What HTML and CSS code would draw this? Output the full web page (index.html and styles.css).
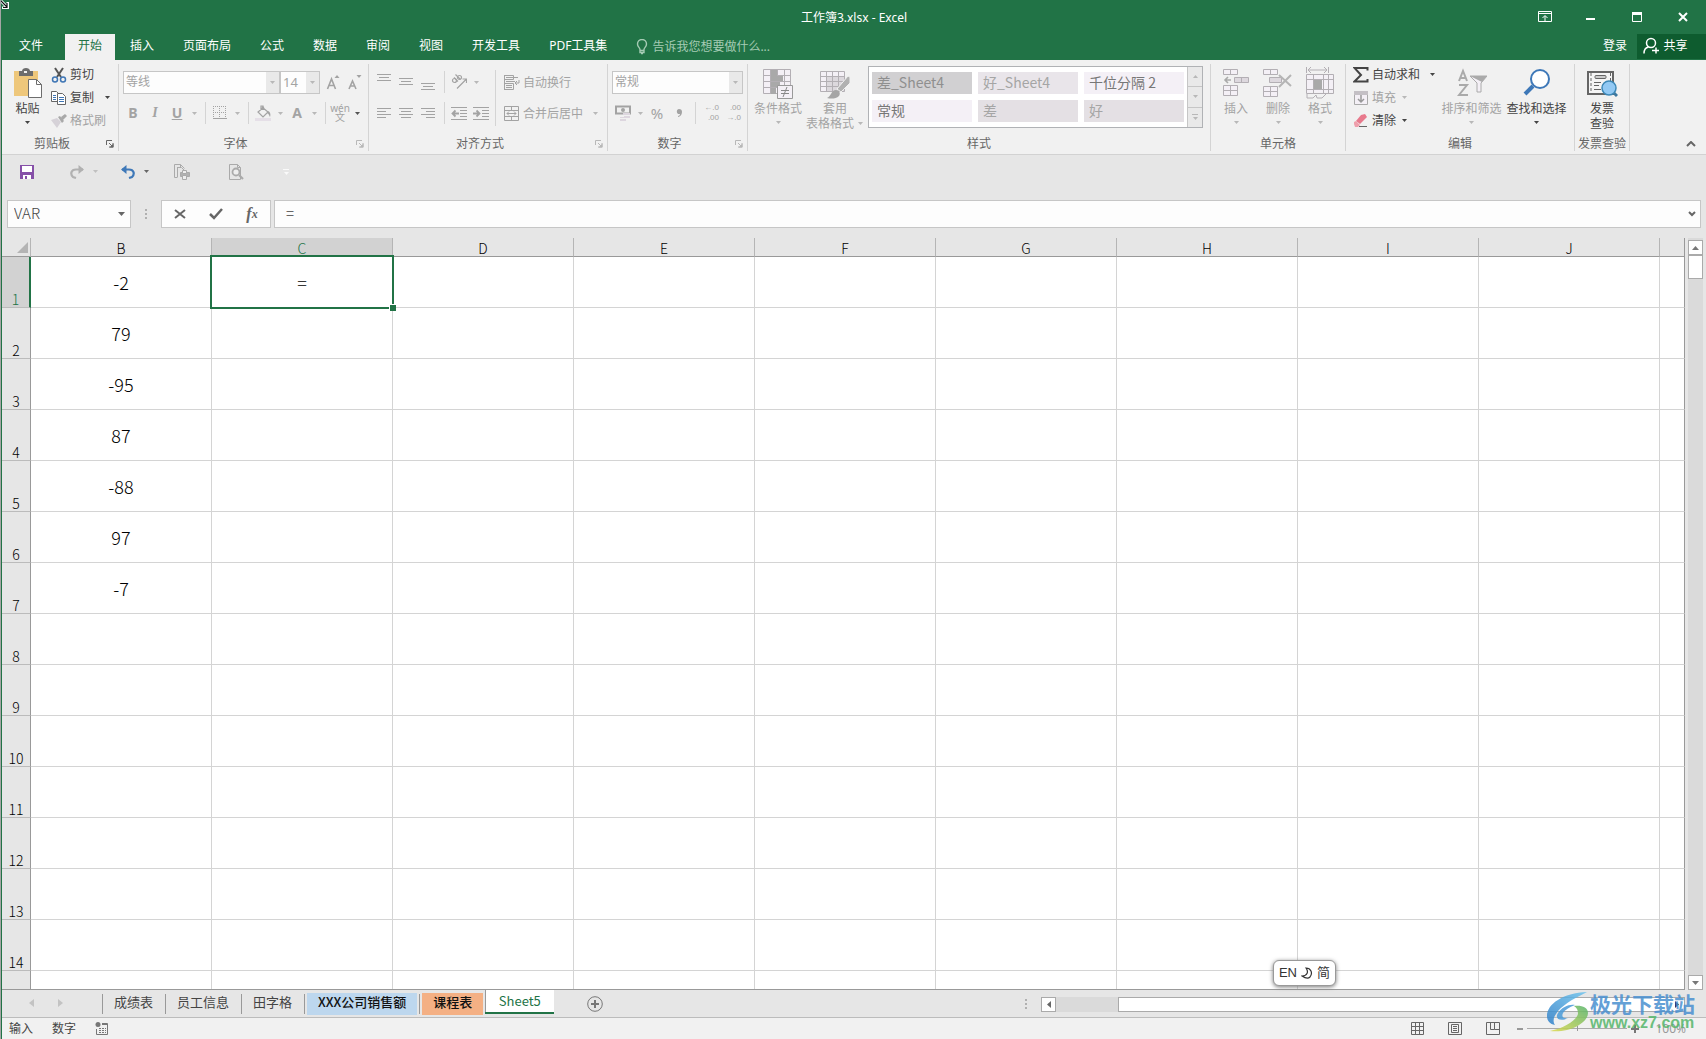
FILE: index.html
```html
<!DOCTYPE html>
<html lang="zh-CN">
<head>
<meta charset="utf-8">
<meta name="viewport" content="width=device-width, initial-scale=1">
<title>工作簿3.xlsx - Excel</title>
<link rel="stylesheet" href="styles.css">
</head>
<body>
<svg class="defs" width="0" height="0" aria-hidden="true">
  <symbol id="launch" viewBox="0 0 8 8"><path d="M.5 5V.5H6M3 3l3 3M7 3v4H3" fill="none" stroke="currentColor"/><path d="M7.500 3.500v4h-4z" fill="currentColor"/></symbol>
  <symbol id="down" viewBox="0 0 5 3"><path d="M0 0h5L2.500 3z" fill="currentColor"/></symbol>
</svg>
<div class="app">
  <header class="titlebar">
    <h1 class="title">工作簿3.xlsx - Excel</h1>
    <div class="window-buttons">
      <button aria-label="功能区显示选项"><svg width="14" height="12" viewBox="0 0 14 12"><path d="M.5.5h13v10H.5zM.5 2.500h13M7 10V5M4.500 7L7 4.500 9.500 7" fill="none" stroke="currentColor"/></svg></button>
      <button aria-label="最小化"><svg width="10" height="10" viewBox="0 0 10 10"><path d="M0 6h9v2H0z" fill="currentColor"/></svg></button>
      <button aria-label="最大化"><svg width="10" height="10" viewBox="0 0 10 10"><path d="M.5.5h9v9h-9z" fill="none" stroke="currentColor"/><path d="M0 0h10v3H0z" fill="currentColor"/></svg></button>
      <button aria-label="关闭"><svg width="10" height="10" viewBox="0 0 10 10"><path d="M1 1l8 8M9 1L1 9" stroke="currentColor" stroke-width="2"/></svg></button>
    </div>
  </header>

  <nav class="tabs" aria-label="功能区选项卡">
    <button class="tab file">文件</button>
    <button class="tab active">开始</button>
    <button class="tab">插入</button>
    <button class="tab">页面布局</button>
    <button class="tab">公式</button>
    <button class="tab">数据</button>
    <button class="tab">审阅</button>
    <button class="tab">视图</button>
    <button class="tab">开发工具</button>
    <button class="tab">PDF工具集</button>
    <button class="tell"><svg width="12" height="16" viewBox="0 0 12 16" fill="none" stroke="currentColor" stroke-width="1.400"><path d="M4 10.500C4 8.500 1.500 8 1.500 5a4.500 4.500 0 0 1 9 0c0 3-2.500 3.500-2.500 5.500v3H4zM4 11.500h4M5 14.500h2"/></svg>告诉我您想要做什么...</button>
    <button class="login">登录</button>
    <button class="share"><svg width="16" height="17" viewBox="0 0 16 17" fill="none" stroke="currentColor" stroke-width="1.500"><circle cx="8" cy="6" r="4.500"/><path d="M1 16.500c0-4 2-6 4.500-6.500M13 10.500v6M9 13.500h7"/></svg>共享</button>
  </nav>

  <div class="ribbon">
    <section class="group g-clip">
      <div class="body">
        <button class="big paste"><svg width="30" height="32" viewBox="0 0 30 32"><path d="M1 4h24v25H1z" fill="#eec77b"/><path d="M6 4h3c0-4 8-4 8 0h3v5H6z" fill="#6d6d6d"/><path d="M11 4h3v2h-3z" fill="#f1f1f1"/><path d="M15.500 12.500h8l5 5v13h-13z" fill="#fff" stroke="#6d6d6d"/><path d="M23.500 12.500v5h5" fill="none" stroke="#6d6d6d"/></svg><span>粘贴</span><svg class="dn"><use href="#down"/></svg></button>
        <div class="stack">
          <button class="line"><svg width="16" height="16" viewBox="0 0 16 16" fill="none"><path d="M4 1l6 9M12 1L6 10" stroke="#555" stroke-width="2"/><circle cx="4" cy="12.500" r="2.500" stroke="#3f76b5" stroke-width="1.500"/><circle cx="12" cy="12.500" r="2.500" stroke="#3f76b5" stroke-width="1.500"/></svg>剪切</button>
          <button class="line copy"><svg width="16" height="16" viewBox="0 0 16 16"><path d="M.5 1.500h5l2 2v8h-7z" fill="#fff" stroke="#666"/><path d="M2 5.500h3M2 7.500h3M2 9.500h3" stroke="#3f76b5"/><path d="M6.500 3.500h5l3 3v8h-8z" fill="#fff" stroke="#666"/><path d="M8 7.500h5M8 9.500h5M8 11.500h5" stroke="#3f76b5"/></svg>复制<svg class="dn"><use href="#down"/></svg></button>
          <button class="line off"><svg width="16" height="16" viewBox="0 0 16 16"><path d="M0 7l6-2 4 4-4 6z" fill="#d6d2d8"/><path d="M7 4l2-1 4 5-2 2zM10 4l4-3 2 2-4 4z" fill="#a9a9a9"/></svg>格式刷</button>
        </div>
      </div>
      <footer><h2>剪贴板</h2><button aria-label="剪贴板设置"><svg width="8" height="8"><use href="#launch"/></svg></button></footer>
    </section>

    <section class="group g-font off">
      <div class="body rows">
        <div class="row">
          <label class="combo wide"><select aria-label="字体"><option>等线</option></select><svg class="dn"><use href="#down"/></svg></label>
          <label class="combo size"><select aria-label="字号"><option>14</option></select><svg class="dn"><use href="#down"/></svg></label>
          <button class="tool" aria-label="增大字号"><svg width="14" height="16" viewBox="0 0 14 16"><path d="M1.500 15L5.500 5l4 10M3 11.500h5" fill="none" stroke="currentColor" stroke-width="1.600"/><path d="M8.500 4L11 1l2.500 3z" fill="currentColor"/></svg></button>
          <button class="tool" aria-label="减小字号"><svg width="14" height="16" viewBox="0 0 14 16"><path d="M1 15l3.500-8L8 15M2.500 12h4" fill="none" stroke="currentColor" stroke-width="1.600"/><path d="M8.500 1L11 4l2.500-3z" fill="currentColor"/></svg></button>
        </div>
        <div class="row">
          <button class="tool glyph bold">B</button><button class="tool glyph italic">I</button><button class="tool glyph under">U</button><button class="drop" aria-label="下划线选项"><svg class="dn"><use href="#down"/></svg></button><i class="sep"></i>
          <button class="tool" aria-label="边框"><svg width="14" height="14" viewBox="0 0 14 14"><path d="M.5 0v13M6.500 0v13M12.500 0v13M0 .5h13M0 6.500h13" stroke="currentColor" stroke-dasharray="1 1"/><path d="M0 12.500h14" stroke="currentColor"/></svg></button><button class="drop" aria-label="边框选项"><svg class="dn"><use href="#down"/></svg></button><i class="sep"></i>
          <button class="tool" aria-label="填充颜色"><svg width="16" height="16" viewBox="0 0 16 16"><path d="M7 2l6 5-5 5-5-5 6-5M6 5V1h2v4" fill="none" stroke="currentColor" stroke-width="1.200"/><path d="M12 6c3 0 4 3 3 6-1-2-1-3-3-4z" fill="currentColor"/><path d="M0 13h16v3H0z" fill="#e5dfe7"/></svg></button><button class="drop" aria-label="填充颜色选项"><svg class="dn"><use href="#down"/></svg></button>
          <button class="tool glyph bold">A</button><button class="drop" aria-label="字体颜色选项"><svg class="dn"><use href="#down"/></svg></button><i class="sep"></i>
          <button class="tool wen"><span>wén</span><span>文</span></button><button class="drop on" aria-label="拼音选项"><svg class="dn"><use href="#down"/></svg></button>
        </div>
      </div>
      <footer><h2>字体</h2><button aria-label="字体设置"><svg width="8" height="8"><use href="#launch"/></svg></button></footer>
    </section>

    <section class="group g-align off">
      <div class="body">
        <div class="rows">
          <div class="row">
            <button class="tool" aria-label="顶端对齐"><svg width="14" height="16" viewBox="0 0 14 16"><path d="M0 .5h14M2 3.500h10M0 6.500h14" stroke="currentColor"/></svg></button>
            <button class="tool" aria-label="垂直居中"><svg width="14" height="16" viewBox="0 0 14 16"><path d="M0 4.500h14M2 7.500h10M0 10.500h14" stroke="currentColor"/></svg></button>
            <button class="tool" aria-label="底端对齐"><svg width="14" height="16" viewBox="0 0 14 16"><path d="M0 9.500h14M2 12.500h10M0 15.500h14" stroke="currentColor"/></svg></button><i class="sep"></i>
            <button class="tool" aria-label="方向"><svg width="16" height="16" viewBox="0 0 16 16" fill="none" stroke="currentColor" stroke-width="1.200"><circle cx="3.500" cy="6.500" r="2"/><path d="M3 3.500l4 4M4.500 .5l5 5"/><circle cx="8.500" cy="3.500" r="2"/><path d="M6 14.500l9-9M11.500 5H15.500v4"/></svg></button><button class="drop" aria-label="方向选项"><svg class="dn"><use href="#down"/></svg></button>
          </div>
          <div class="row">
            <button class="tool" aria-label="左对齐"><svg width="14" height="11" viewBox="0 0 14 11"><path d="M0 .5h14M0 3.500h9M0 6.500h14M0 9.500h9" stroke="currentColor"/></svg></button>
            <button class="tool" aria-label="居中"><svg width="14" height="11" viewBox="0 0 14 11"><path d="M0 .5h14M2 3.500h10M0 6.500h14M2 9.500h10" stroke="currentColor"/></svg></button>
            <button class="tool" aria-label="右对齐"><svg width="14" height="11" viewBox="0 0 14 11"><path d="M0 .5h14M5 3.500h9M0 6.500h14M5 9.500h9" stroke="currentColor"/></svg></button><i class="sep"></i>
            <button class="tool" aria-label="减少缩进"><svg width="16" height="13" viewBox="0 0 16 13"><path d="M0 .5h16M9 3.500h7M9 6.500h7M9 9.500h7M0 12.500h16" stroke="currentColor"/><path d="M8 6.500H2M4.500 3.500l-3 3 3 3" fill="none" stroke="currentColor" stroke-width="1.800"/></svg></button>
            <button class="tool" aria-label="增加缩进"><svg width="16" height="13" viewBox="0 0 16 13"><path d="M0 .5h16M9 3.500h7M9 6.500h7M9 9.500h7M0 12.500h16" stroke="currentColor"/><path d="M0 6.500h6M3.500 3.500l3 3-3 3" fill="none" stroke="currentColor" stroke-width="1.800"/></svg></button>
          </div>
        </div>
        <i class="sep tall"></i>
        <div class="rows">
          <div class="row"><button class="line"><svg width="16" height="16" viewBox="0 0 16 16" fill="none" stroke="currentColor"><path d="M.5.500h9v4h-9zM.5 8.500h9v6h-9zM2 2.500h12M2 6.500h9M2 10.500h6M2 12.500h6M15 5v3h-4M13 6l-2 2 2 2M.5 0v15"/></svg>自动换行</button></div>
          <div class="row"><button class="line"><svg width="16" height="16" viewBox="0 0 16 16" fill="none" stroke="currentColor"><path d="M.5.500h14v14H.5zM.5 4.500h14M.5 10.500h14M7.500 0v4M7.500 11v4M3 7.500h9M5 5.500l-2 2 2 2M10 5.500l2 2-2 2"/></svg>合并后居中</button><button class="drop push" aria-label="合并选项"><svg class="dn"><use href="#down"/></svg></button></div>
        </div>
      </div>
      <footer><h2>对齐方式</h2><button aria-label="对齐设置"><svg width="8" height="8"><use href="#launch"/></svg></button></footer>
    </section>

    <section class="group g-num off">
      <div class="body rows">
        <div class="row"><label class="combo fill"><select aria-label="数字格式"><option>常规</option></select><svg class="dn"><use href="#down"/></svg></label></div>
        <div class="row">
          <button class="tool" aria-label="会计数字格式"><svg width="16" height="16" viewBox="0 0 16 16"><path d="M1 1.500h14v7H1z" fill="none" stroke="currentColor" stroke-width="2"/><circle cx="8" cy="5" r="2" fill="currentColor"/><path d="M8 8h7v2H8zM5 12h6v1H5zM9 11h6v2H9zM5 14h6v2H5z" fill="#ddd6df"/></svg></button><button class="drop" aria-label="货币选项"><svg class="dn"><use href="#down"/></svg></button>
          <button class="tool pct">%</button><button class="tool" aria-label="千位分隔样式"><svg width="6" height="8" viewBox="0 0 6 8"><path d="M3 0c2 0 3 1 3 3 0 3-2 4.500-4 5V7c1 0 2-1 2-2-4 1-4-5-1-5z" fill="currentColor"/></svg></button><i class="sep"></i>
          <button class="tool dec"><span>←.0</span><span>.00</span></button><button class="tool dec"><span>.00</span><span>→.0</span></button>
        </div>
      </div>
      <footer><h2>数字</h2><button aria-label="数字设置"><svg width="8" height="8"><use href="#launch"/></svg></button></footer>
    </section>

    <section class="group g-style off">
      <div class="body">
        <button class="big w60"><svg width="30" height="32" viewBox="0 0 30 32"><path d="M.5 2.500h27v24H.5z" fill="#f4f0f6" stroke="#b3afb4"/><path d="M1 8.500h27M1 14.500h27M1 20.500h27M7.500 3v24M14.500 3v24M21.500 3v24" stroke="#b3afb4"/><path d="M8 3h6v6H8zM8 9h12v5H8zM8 15h9v5H8zM8 21h5v6H8z" fill="#a9a9a9"/><path d="M14.500 18.500h15v13h-15z" fill="#f4f0f6" stroke="#999"/><path d="M18 23.500h8M18 26.500h8M24 20l-4 10" stroke="#888"/></svg><span>条件格式</span><svg class="dn"><use href="#down"/></svg></button>
        <button class="big w60 table-style"><svg width="30" height="32" viewBox="0 0 30 32"><path d="M.5 4.500h24v20H.5z" fill="#f4f0f6" stroke="#b3afb4"/><path d="M7 10h17v14H7z" fill="#dcd8dd"/><path d="M1 9.500h24M1 14.500h24M1 19.500h24M6.500 5v20M12.500 5v20M18.500 5v20" stroke="#b3afb4"/><path d="M17 22L28 9l2 1v6l-9 9z" fill="#b1b1b1" stroke="#f1f1f1"/><path d="M7 31c4-1 4-8 9-8 3 0 5 3 3 6-3 3-8 3-12 2z" fill="#a5a5a5"/></svg><span>套用</span><span class="with-dn">表格格式<svg class="dn"><use href="#down"/></svg></span></button>
        <div class="gallery">
          <div class="swatches"><button class="s-sel">差_Sheet4</button><button class="s-b">好_Sheet4</button><button class="s-a dark">千位分隔 2</button><button class="s-a dark">常规</button><button class="s-c">差</button><button class="s-c">好</button></div>
          <div class="gallery-nav"><button aria-label="上一行"><svg class="dn flip"><use href="#down"/></svg></button><button aria-label="下一行"><svg class="dn"><use href="#down"/></svg></button><button class="more" aria-label="其他样式"><svg class="dn"><use href="#down"/></svg></button></div>
        </div>
      </div>
      <footer><h2>样式</h2></footer>
    </section>

    <section class="group g-cells off">
      <div class="body">
        <button class="big w42"><svg width="26" height="32" viewBox="0 0 26 32"><path d="M.5 2.500h14v5H.5zM7.500 2v6M.5 18.500h14v10H.5zM.5 23.500h14M7.500 18v11" fill="#f4f0f6" stroke="#b3afb4"/><path d="M11.500 10.500h14v5h-14zM18.500 10v6" fill="#ddd8de" stroke="#b3afb4"/><path d="M8 13H2M5 10l-3 3 3 3" fill="none" stroke="#aaa" stroke-width="1.600"/></svg><span>插入</span><svg class="dn"><use href="#down"/></svg></button>
        <button class="big w42"><svg width="30" height="32" viewBox="0 0 30 32"><path d="M.5 2.500h14v5H.5zM7.500 2v6M.5 19.500h14v10H.5zM.5 24.500h14M7.500 19v11" fill="#f4f0f6" stroke="#b3afb4"/><path d="M6.500 10.500h12v5h-12z" fill="#ddd8de" stroke="#b3afb4"/><path d="M16 8l12 11M28 8L16 20" stroke="#b5b5b5" stroke-width="2"/></svg><span>删除</span><svg class="dn"><use href="#down"/></svg></button>
        <button class="big w42"><svg width="28" height="32" viewBox="0 0 28 32"><path d="M.5 7.500h27v18H.5z" fill="#f4f0f6"/><path d="M.5 0v6M22.500 0v6M2 3h19M5 0L2 3l3 3M18 0l3 3-3 3M.5 7.500h27v19H.5zM.5 12.500h27M.5 22.500h27M7.500 7v20M17.500 7v20M22.500 7v20M1 27v4h6l3-3 1 3h5l4-4" fill="none" stroke="#b3afb4"/><path d="M8 13h8v9H8z" fill="#a9a9a9"/></svg><span>格式</span><svg class="dn"><use href="#down"/></svg></button>
      </div>
      <footer><h2>单元格</h2></footer>
    </section>

    <section class="group g-edit">
      <div class="body">
        <div class="stack">
          <button class="line"><svg width="16" height="16" viewBox="0 0 16 16"><path d="M14.500 3.500V1H1.500L8 8l-6.500 6.500h13V12" fill="none" stroke="#444" stroke-width="2"/></svg>自动求和<svg class="dn far"><use href="#down"/></svg></button>
          <button class="line off"><svg width="16" height="16" viewBox="0 0 16 16"><path d="M1.500 1.500h13v13h-13z" fill="#f4f0f6" stroke="#aaa"/><path d="M1 1h14v4H1z" fill="#c4c0c5"/><path d="M8 5v7M5 9l3 3 3-3" fill="none" stroke="#999" stroke-width="1.500"/></svg>填充<svg class="dn"><use href="#down"/></svg></button>
          <button class="line"><svg width="16" height="16" viewBox="0 0 16 16"><path d="M8 2l4-1 2 3-7 7-4-3z" fill="#e8798c"/><path d="M1 9l2-1 4 4-2 2H2L1 11z" fill="#ef9fac"/><path d="M6 13.500h8" stroke="#666"/></svg>清除<svg class="dn"><use href="#down"/></svg></button>
        </div>
        <button class="big w65 off"><svg width="30" height="32" viewBox="0 0 30 32" fill="none" stroke="#aaa" stroke-width="2"><path d="M2 14L6 4l4 10M3 11h6M2 18h8L2 28h9"/><path d="M13 9h17l-6 7v9h-4v-9z" fill="#f4f0f6" stroke-width="1"/><path d="M13 9h17l-5 6z" fill="#aaa" stroke="none"/></svg><span>排序和筛选</span><svg class="dn"><use href="#down"/></svg></button>
        <button class="big w65"><svg width="30" height="32" viewBox="0 0 30 32"><circle cx="18" cy="12" r="9" fill="#fff" stroke="#3e78b8" stroke-width="2"/><path d="M11 19l-8 8" stroke="#3e78b8" stroke-width="4"/></svg><span>查找和选择</span><svg class="dn"><use href="#down"/></svg></button>
      </div>
      <footer><h2>编辑</h2></footer>
    </section>

    <section class="group g-inv">
      <div class="body">
        <button class="big w55"><svg width="32" height="32" viewBox="0 0 32 32"><path d="M2 5h25v22H2z" fill="#f5f5f5" stroke="#666" stroke-width="2"/><path d="M5 6v20M24.500 6v8" stroke="#666" stroke-dasharray="3 2"/><rect x="9" y="8.500" width="11" height="3" rx="1" fill="#ccc" stroke="#666"/><path d="M8 15.500h7M8 18.500h5M8 22.500h7" stroke="#666"/><path d="M27 25l4 4" stroke="#3d789f" stroke-width="3"/><circle cx="23" cy="21" r="7" fill="#92c9f4" stroke="#3d88b7" stroke-width="1.500"/></svg><span>发票</span><span>查验</span></button>
      </div>
      <footer><h2>发票查验</h2></footer>
    </section>
    <button class="collapse" aria-label="折叠功能区"><svg width="10" height="6" viewBox="0 0 10 6"><path d="M1 5l4-4 4 4" fill="none" stroke="currentColor" stroke-width="2"/></svg></button>
  </div>

  <div class="quick">
    <button aria-label="保存"><svg width="14" height="14" viewBox="0 0 14 14"><path d="M0 0h14v14H0z" fill="#8650a8"/><path d="M2 1h10v6H2zM3 10h8v4H3z" fill="#fff"/><path d="M5 11h2v3H5z" fill="#8650a8"/></svg></button>
    <button class="redo" aria-label="恢复"><svg width="14" height="14" viewBox="0 0 14 14"><path d="M13 4.500H6C1 4.500 0 9 3 12l3 1" fill="none" stroke="#b1b1b1" stroke-width="2.200"/><path d="M8.500 0l5.500 4.500-5.500 4.500" fill="#b1b1b1"/></svg><svg class="dn pale"><use href="#down"/></svg></button>
    <button class="undo" aria-label="撤消"><svg width="14" height="14" viewBox="0 0 14 14"><path d="M1 4.500h7c5 0 6 4.500 3 7.500l-3 1" fill="none" stroke="#3e78b8" stroke-width="2.200"/><path d="M5.500 0L0 4.500 5.500 9" fill="#3e78b8"/></svg><svg class="dn"><use href="#down"/></svg></button>
    <button class="print" aria-label="快速打印"><svg width="16" height="16" viewBox="0 0 16 16" fill="none" stroke="#aaa"><path d="M3.500 13.500H.5V.5h6l4 4M3.500 3v10M6.500 .5V3.500M3.500 3.500h4l3 3"/><path d="M6.500 8.500h9v4h-9z" fill="#b1b1b1"/><path d="M8.500 6.500h4v3h-4zM8.500 11.500h4v4h-4z" fill="#eee"/></svg></button>
    <button class="preview" aria-label="打印预览"><svg width="15" height="16" viewBox="0 0 15 16" fill="none" stroke="#aaa"><path d="M.5.500h8l3 3v12H.5zM8.500.500v3h3"/><circle cx="7" cy="8" r="3.500" fill="#eee" stroke-width="1.800"/><path d="M10 11l4 4" stroke-width="2.200"/></svg></button>
    <button class="more-q" aria-label="自定义快速访问工具栏"><svg class="dn"><use href="#down"/></svg></button>
  </div>

  <div class="formula-bar">
    <div class="namebox"><input aria-label="名称框" value="VAR"><button aria-label="名称列表"><svg width="7" height="4" viewBox="0 0 7 4"><path d="M0 0h7L3.500 4z" fill="#666"/></svg></button></div>
    <i class="grip"></i>
    <div class="fx">
      <button aria-label="取消"><svg width="12" height="10" viewBox="0 0 12 10"><path d="M1 1l10 8M11 1L1 9" stroke="#666" stroke-width="2"/></svg></button>
      <button aria-label="输入"><svg width="14" height="12" viewBox="0 0 14 12"><path d="M1 6l4 4 8-9" fill="none" stroke="#666" stroke-width="2.500"/></svg></button>
      <button class="fx-glyph"><em>f</em><sub>x</sub></button>
    </div>
    <div class="formula"><input aria-label="编辑栏" value="="><button aria-label="展开编辑栏"><svg width="8" height="6" viewBox="0 0 8 6"><path d="M1 1l3 3 3-3" fill="none" stroke="#666" stroke-width="2"/></svg></button></div>
  </div>

  <main class="sheet">
    <div class="grid">
      <table>
        <colgroup><col class="c-head"><col class="c"><col class="c"><col class="c"><col class="c"><col class="c"><col class="c"><col class="c"><col class="c"><col class="c"><col></colgroup>
        <thead><tr><th class="corner"><svg width="11" height="11" viewBox="0 0 11 11"><path d="M11 0v11H0z" fill="#b4b4b4"/></svg></th><th scope="col">B</th><th scope="col" class="hot">C</th><th scope="col">D</th><th scope="col">E</th><th scope="col">F</th><th scope="col">G</th><th scope="col">H</th><th scope="col">I</th><th scope="col">J</th><th></th></tr></thead>
        <tbody>
          <tr><th scope="row" class="hot">1</th><td>-2</td><td class="selected">=</td><td></td><td></td><td></td><td></td><td></td><td></td><td></td><td></td></tr>
          <tr><th scope="row">2</th><td>79</td><td></td><td></td><td></td><td></td><td></td><td></td><td></td><td></td><td></td></tr>
          <tr><th scope="row">3</th><td>-95</td><td></td><td></td><td></td><td></td><td></td><td></td><td></td><td></td><td></td></tr>
          <tr><th scope="row">4</th><td>87</td><td></td><td></td><td></td><td></td><td></td><td></td><td></td><td></td><td></td></tr>
          <tr><th scope="row">5</th><td>-88</td><td></td><td></td><td></td><td></td><td></td><td></td><td></td><td></td><td></td></tr>
          <tr><th scope="row">6</th><td>97</td><td></td><td></td><td></td><td></td><td></td><td></td><td></td><td></td><td></td></tr>
          <tr><th scope="row">7</th><td>-7</td><td></td><td></td><td></td><td></td><td></td><td></td><td></td><td></td><td></td></tr>
          <tr><th scope="row">8</th><td></td><td></td><td></td><td></td><td></td><td></td><td></td><td></td><td></td><td></td></tr>
          <tr><th scope="row">9</th><td></td><td></td><td></td><td></td><td></td><td></td><td></td><td></td><td></td><td></td></tr>
          <tr><th scope="row">10</th><td></td><td></td><td></td><td></td><td></td><td></td><td></td><td></td><td></td><td></td></tr>
          <tr><th scope="row">11</th><td></td><td></td><td></td><td></td><td></td><td></td><td></td><td></td><td></td><td></td></tr>
          <tr><th scope="row">12</th><td></td><td></td><td></td><td></td><td></td><td></td><td></td><td></td><td></td><td></td></tr>
          <tr><th scope="row">13</th><td></td><td></td><td></td><td></td><td></td><td></td><td></td><td></td><td></td><td></td></tr>
          <tr><th scope="row">14</th><td></td><td></td><td></td><td></td><td></td><td></td><td></td><td></td><td></td><td></td></tr>
          <tr><th></th><td></td><td></td><td></td><td></td><td></td><td></td><td></td><td></td><td></td><td></td></tr>
        </tbody>
      </table>
    </div>
    <div class="vscroll">
      <button aria-label="向上滚动"><svg width="7" height="4" viewBox="0 0 7 4"><path d="M0 4h7L3.500 0z" fill="#777"/></svg></button>
      <div class="thumb"></div>
      <button class="end" aria-label="向下滚动"><svg width="7" height="4" viewBox="0 0 7 4"><path d="M0 0h7L3.500 4z" fill="#777"/></svg></button>
    </div>
  </main>

  <div class="sheetbar">
    <div class="sheet-nav"><button aria-label="上一个工作表"><svg width="5" height="8" viewBox="0 0 5 8"><path d="M5 0v8L0 4z" fill="#c3c3c3"/></svg></button><button aria-label="下一个工作表"><svg width="5" height="8" viewBox="0 0 5 8"><path d="M0 0v8l5-4z" fill="#c3c3c3"/></svg></button></div>
    <button class="sheet-tab">成绩表</button>
    <button class="sheet-tab">员工信息</button>
    <button class="sheet-tab">田字格</button>
    <button class="sheet-tab tint blue"><span>XXX公司销售额</span></button>
    <button class="sheet-tab tint orange"><span>课程表</span></button>
    <button class="sheet-tab current">Sheet5</button>
    <button class="add" aria-label="新工作表"><svg width="16" height="16" viewBox="0 0 16 16"><circle cx="8" cy="8" r="7.300" fill="none" stroke="#777"/><path d="M8 4v8M4 8h8" stroke="#777" stroke-width="2"/></svg></button>
    <i class="grip"></i>
    <div class="hscroll">
      <button aria-label="向左滚动"><svg width="4" height="7" viewBox="0 0 4 7"><path d="M4 0v7L0 3.500z" fill="#666"/></svg></button>
      <div class="thumb"></div>
      <button aria-label="向右滚动"><svg width="4" height="7" viewBox="0 0 4 7"><path d="M0 0v7l4-3.500z" fill="#335"/></svg></button>
    </div>
  </div>

  <footer class="status">
    <span>输入</span><span>数字</span>
    <button aria-label="录制宏"><svg width="13" height="13" viewBox="0 0 13 13"><circle cx="3" cy="2.500" r="2.500" fill="#777"/><path d="M7 1.500h5.500v11H1.500V7M7 2.500h5M4 6.500h2M7 6.500h2M10 6.500h1M4 8.500h2M7 8.500h2M10 8.500h1M4 10.500h2M7 10.500h2M10 10.500h1" fill="none" stroke="#777"/></svg></button>
    <div class="views">
      <button aria-label="普通"><svg width="13" height="13" viewBox="0 0 13 13"><path d="M.5.500h12v12H.5zM4.500 0v13M8.500 0v13M0 4.500h13M0 8.500h13" fill="none" stroke="#666"/></svg></button>
      <button aria-label="页面布局"><svg width="14" height="13" viewBox="0 0 14 13"><path d="M.5.500h13v12H.5zM3.500 2.500h7v8h-7zM5 4.500h4M5 6.500h4M5 8.500h4" fill="none" stroke="#666"/></svg></button>
      <button aria-label="分页预览"><svg width="14" height="13" viewBox="0 0 14 13"><path d="M.5.500h13v12H.5zM4.500.500v7h4v-7M8.500 7.500h5" fill="none" stroke="#666"/></svg></button>
    </div>
    <div class="zoom"><button aria-label="缩小"><svg width="6" height="2"><path d="M0 0h6v2H0z" fill="#999"/></svg></button><input type="range" aria-label="显示比例" min="0" max="100" value="50"><button aria-label="放大"><svg width="8" height="8" viewBox="0 0 8 8"><path d="M4 0v8M0 4h8" stroke="#777" stroke-width="2"/></svg></button><span>100%</span></div>
  </footer>
</div>

<svg class="pointer" width="9" height="9" viewBox="0 0 9 9"><path d="M1 1l6 6M8 2v6H2" stroke="#fff" stroke-width="3" fill="none"/><path d="M1 1l6 6M7 3v4.500H3" stroke="#111" stroke-width="1.200" fill="none"/></svg>
<div class="ime"><span>EN</span><svg width="12" height="12" viewBox="0 0 12 12"><path d="M5 1c5 0 7 5 4 9-2 2-5 1-8-1 5 0 7-4 4-8z" fill="none" stroke="#333" stroke-width="1.200"/></svg><span>简</span></div>
<aside class="brand">
  <svg width="42" height="40" viewBox="0 0 42 40"><defs><linearGradient id="sky" x1="0" y1="1" x2="1" y2="0"><stop offset="0" stop-color="#2f7fc8"/><stop offset="1" stop-color="#6fc5ee"/></linearGradient><linearGradient id="leaf" x1="1" y1="0" x2="0" y2="1"><stop offset="0" stop-color="#57b56b"/><stop offset="1" stop-color="#dfd94c"/></linearGradient></defs><path d="M40 0C16 1 0 12 0 24c0 5 3 8 8 9-2-3-2-7 1-11C14 14 24 8 40 0z" fill="url(#sky)"/><path d="M11 21c4-6 11-9 17-8-6 2-10 5-12 8-2 4 1 6 5 5-7 4-14 1-10-5z" fill="#4a9bd9"/><path d="M27 14c7-1 14 1 14 7 0 9-16 20-38 18 14-3 26-10 28-17 0-4-1-6-4-8z" fill="url(#leaf)"/></svg>
  <div><strong>极光下载站</strong><b>www.xz7.com</b></div>
</aside>
</body>
</html>
```
FILE: styles.css
```css
* { box-sizing: border-box; }
html { background: #e6e6e6; }
body {
  margin: 0;
  height: 100vh;
  overflow: hidden;
  border-left: 1px solid #a5a5a5;
  position: relative;
  font: 12px/16px "Noto Sans", "Noto Sans CJK SC", sans-serif;
  color: #444;
}
button, input, select {
  font: inherit;
  color: inherit;
  background: none;
  border: 0;
  padding: 0;
  margin: 0;
  border-radius: 0;
}
button { display: flex; align-items: center; justify-content: center; white-space: nowrap; }
svg { display: block; flex: none; }
i { flex: none; }
h1, h2 { margin: 0; font: inherit; }
.defs { position: absolute; }
.dn { width: 5px; height: 3px; }
.flip { transform: rotate(180deg); }

.app { height: 100%; display: flex; flex-direction: column; border-left: 1px solid #217346; }

/* Title bar and ribbon tabs */
.titlebar { display: grid; grid-template-columns: 1fr auto 1fr; align-items: center; height: 34px; background: #217346; color: #fff; }
.title { grid-column: 2; padding-top: 2px; }
.window-buttons { display: flex; justify-content: flex-end; }
.window-buttons button { width: 46px; height: 32px; }
.tabs { display: flex; gap: 1px; height: 26px; background: #217346; color: #fff; }
.tab { padding: 0 14px 2px; }
.tab.file { width: 62px; padding: 0 4px 2px 0; }
.tab.active { padding: 0 13px 2px; background: #f1f1f1; color: #217346; }
.tell { gap: 4px; padding-left: 14px; color: #a5cbb4; }
.login { margin-left: auto; padding: 0 9px 2px; }
.share { width: 69px; height: 25px; gap: 4px; padding: 0 12px 2px 0; background: #0e5c2f; }

/* Ribbon */
.ribbon { display: flex; height: 95px; flex: none; padding: 4px 0 3px; background: #f1f1f1; border-bottom: 1px solid #d2d2d2; }
.group { display: flex; flex-direction: column; flex: none; border-right: 1px solid #d4d4d4; }
.body { display: flex; height: 73px; }
.group footer { display: flex; height: 14px; align-items: center; color: #666; }
.group h2 { flex: 1; text-align: center; white-space: nowrap; }
.group footer button { width: 16px; height: 14px; }
.off .body, .line.off, .big.off { color: #a3a3a3; }
.off footer button { color: #b8b8b8; }
.off .dn { color: #b8b8b8; }
.g-clip { width: 117px; }
.g-font { width: 250px; }
.g-align { width: 239px; }
.g-num { width: 140px; }
.g-style { width: 463px; }
.g-cells { width: 135px; }
.g-edit { width: 229px; }
.g-inv { width: 55px; }

.big { flex-direction: column; justify-content: flex-start; padding-top: 3px; line-height: 16px; }
.big span { line-height: 15px; }
.big > svg:first-child { margin-bottom: 2px; }
.big > .dn { margin-top: 5px; }
.with-dn { position: relative; }
.with-dn .dn { position: absolute; left: 100%; top: 6px; margin-left: 4px; }
.paste { width: 49px; padding-left: 2px; }
.w42 { width: 42px; }
.w55 { width: 54px; }
.w60 { width: 58px; }
.table-style { padding-right: 2px; }
.table-style .with-dn { margin-right: 10px; }
.w65 { width: 65px; }
.stack { display: flex; flex-direction: column; }
.stack .line { padding-bottom: 2px; }
.line { height: 23px; gap: 3px; justify-content: flex-start; }
.line .dn { margin-left: 3px; }
.line .dn.far { margin-left: 7px; }
.copy .dn { margin-left: 8px; }
.g-edit .stack { width: 86px; }
.g-edit .body { padding-left: 7px; }
.g-cells .body, .g-align .body { padding-left: 4px; }
.g-style .body { padding-left: 1px; }

.rows { display: flex; flex-direction: column; gap: 7px; }
.body.rows, .body > .rows { padding-top: 6px; }
.g-font .rows { padding-left: 3px; }
.g-num .rows { padding: 6px 4px 0; }
.row { display: flex; height: 24px; align-items: center; }
.row .line { padding-top: 1px; }
.tool { width: 22px; height: 24px; }
.drop { width: 12px; height: 24px; }
.off .drop.on .dn { color: #555; }
.drop.push { margin-left: 6px; }
.sep { width: 1px; height: 22px; margin: 0 3px 0 5px; background: #d4d4d4; }
.sep.tall { height: 56px; margin: 6px 8px 0 3px; }
.glyph { font-size: 14px; }
.bold { font-weight: 700; }
.italic { font-family: "Liberation Serif", serif; font-style: italic; font-weight: 700; }
.under { text-decoration: underline; font-weight: 700; }
.wen, .dec { flex-direction: column; }
.wen span { font-size: 10px; line-height: 9px; }
.dec { padding-right: 2px; }
.dec span { font: 8px/10px "Liberation Sans", "DejaVu Sans", sans-serif; align-self: flex-end; }
.pct { font-size: 15px; }
.combo { display: flex; align-items: center; position: relative; height: 23px; border: 1px solid #c6c6c6; background: linear-gradient(#e9e9e9, #e9e9e9) right / 13px 100% no-repeat #fdfdfd; }
.combo select { width: 100%; height: 100%; appearance: none; padding-left: 2px; }
.combo .dn { position: absolute; right: 4px; }
.combo.wide { width: 157px; margin-left: 1px; }
.combo.size { width: 40px; margin-right: 2px; font-size: 13px; }
.combo.fill { flex: 1; }

.gallery { display: flex; width: 335px; height: 62px; margin: 2px 0 0 3px; border: 1px solid #b0b2b5; background: #fff; }
.swatches { flex: 1; display: grid; grid-template-columns: repeat(3, 100px); grid-auto-rows: 22px; gap: 6px; padding: 5px 3px; }
.swatches button { justify-content: flex-start; padding: 0 0 2px 5px; font-size: 14px; color: #a5a5a5; font-family: "Noto Sans CJK SC", sans-serif; }
.swatches .dark { color: #777; }
.s-sel { background: #d1d0d2; }
.swatches .s-sel { color: #8f8f8f; }
.s-a { background: #f4f0f6; }
.s-b { background: #e9e5ea; }
.s-c { background: #e4e0e4; }
.gallery-nav { display: flex; flex-direction: column; width: 15px; border-left: 1px solid #c6c6c6; background: #e9e9e9; }
.gallery-nav button { flex: 1; flex-direction: column; gap: 2px; color: #b8b8b8; }
.gallery-nav button + button { border-top: 1px solid #c6c6c6; }
.more::before, .more-q::before { content: ""; width: 6px; height: 1px; background: currentColor; }
.collapse { margin-left: auto; align-self: flex-end; width: 30px; height: 14px; color: #666; }

/* Quick access toolbar */
.quick { display: flex; align-items: center; height: 35px; padding: 0 0 2px 18px; flex: none; color: #666; }
.quick button { height: 24px; gap: 9px; }
.redo { margin-left: 36px; }
.undo { margin-left: 23px; }
.print { margin-left: 25px; }
.preview { margin-left: 39px; }
.quick .pale { color: #c0c0c0; }
.quick .more-q { flex-direction: column; gap: 2px; margin-left: 39px; color: #fafafa; }

/* Formula bar */
.formula-bar { display: flex; height: 48px; padding: 10px 5px 10px; flex: none; font-size: 15px; font-family: "Noto Sans CJK SC", sans-serif; font-weight: 300; }
.namebox, .fx, .formula { display: flex; border: 1px solid #c6c6c6; background: #fdfdfd; }
.namebox { width: 124px; }
.namebox input, .formula input { flex: 1; min-width: 0; padding: 0 0 2px 6px; color: #444; }
.formula input { padding-left: 11px; }
.namebox button, .formula button { width: 17px; }
.fx { width: 110px; }
.fx button { flex: 1; }
.formula { flex: 1; margin-left: 3px; }
.fx-glyph { font: italic bold 16px/20px "Liberation Serif", serif; color: #666; }
.fx-glyph sub { font-size: 12px; line-height: 12px; vertical-align: baseline; }
.grip { width: 2px; height: 10px; align-self: center; margin: 0 14px; background: repeating-linear-gradient(#b0b0b0 0 2px, transparent 2px 4px); }

/* Grid */
.sheet { flex: 1; min-height: 0; display: flex; }
.grid { flex: 1; min-width: 0; overflow: hidden; border-bottom: 1px solid #999; }
table { width: 100%; table-layout: fixed; border-collapse: separate; border-spacing: 0; font-family: "Noto Sans CJK SC", sans-serif; }
.c-head { width: 29px; }
.c { width: 181px; }
th, td { padding: 0; border: 0 solid #d4d4d4; border-width: 0 1px 1px 0; text-align: center; }
th { font-weight: 300; font-size: 14px; line-height: 15px; color: #000; background: #e6e6e6; }
thead th { height: 19px; border-color: #b5b5b5; border-bottom-color: #999; vertical-align: bottom; }
tbody th { height: 51px; vertical-align: bottom; border-right-color: #999; border-bottom-color: #bbb; }
tr > :last-child { border-right-color: #999; }
td { background: #fff; font-size: 18px; font-weight: 300; line-height: 24px; color: #000; }
th.hot { background: #d2d2d2; color: #217346; }
tbody th.hot { border-right: 2px solid #217346; }
.corner svg { margin: 0 0 3px 15px; }
.selected { position: relative; }
.selected::before { content: ""; position: absolute; inset: -2px; border: 2px solid #217346; }
.selected::after { content: ""; position: absolute; right: -4px; bottom: -4px; width: 6px; height: 6px; background: #217346; border: 1px solid #fff; border-width: 1px 0 0 1px; }

.vscroll { width: 21px; display: flex; flex-direction: column; padding: 2px 3px 0; background: linear-gradient(#dadada, #dadada) center / 15px 100% no-repeat; }
.vscroll button, .hscroll button { width: 15px; height: 15px; flex: none; background: #fff; border: 1px solid #aaa; }
.vscroll .thumb { height: 24px; background: #fff; border: 1px solid #aaa; }
.vscroll .end { margin-top: auto; }

/* Sheet tabs */
.sheetbar { display: flex; height: 28px; flex: none; border-bottom: 1px solid #bcbcbc; padding-right: 21px; font-size: 13px; }
.sheet-nav { display: flex; width: 100px; padding-left: 15px; }
.sheet-nav button { width: 29px; height: 26px; }
.sheet-tab { position: relative; height: 24px; padding: 0 12px 1px; font-family: "Noto Sans CJK SC", sans-serif; }
.sheet-tab::before { content: ""; position: absolute; left: 0; top: 4px; width: 1px; height: 20px; background: #999; }
.tint { padding: 0 2px 0 3px; color: #111; font-weight: 500; }
.tint span { padding: 1px 11px 5px; margin-top: 3px; }
.blue span { background: #bdd7ee; }
.orange span { background: #f4b084; }
.sheet-tab.current { width: 69px; background: #fff; color: #217346; border-bottom: 2px solid #217346; padding: 0; }
.sheet-tab.current::before { top: 0; height: 22px; }
.add { width: 32px; margin-left: 25px; }
.sheetbar .grip { margin-left: auto; }
.hscroll { display: flex; width: 644px; height: 15px; margin-top: 7px; background: #dadada; }
.hscroll .thumb { flex: 1; margin-left: 62px; background: #fff; border: 1px solid #aaa; border-right: 0; }
.hscroll button:last-child { border-left: 0; }

/* Status bar */
.status { display: flex; height: 21px; flex: none; align-items: center; padding: 0 20px 0 7px; background: #f1f1f1; }
.status > span { margin-right: 19px; }
.views { display: flex; gap: 24px; margin-left: auto; }
.zoom { display: flex; align-items: center; margin-left: 17px; color: #999; }
.zoom input { width: 100px; height: 9px; margin: 0 4px; appearance: none; background: linear-gradient(#aaa, #aaa) center / 100% 1px no-repeat; }
.zoom input::-webkit-slider-thumb { appearance: none; width: 1px; height: 5px; background: #999; }
.zoom span { margin-left: 16px; }

/* Floating overlays */
.pointer { position: absolute; left: -1px; top: 0; }
.ime { position: absolute; right: 370px; bottom: 53px; display: flex; align-items: center; gap: 4px; height: 26px; padding: 0 5px; background: #fff; border: 1px solid #999; border-radius: 6px; box-shadow: 0 1px 4px #777; font: 13px/20px "Liberation Sans", "Noto Sans CJK SC", sans-serif; color: #333; }
.brand { position: absolute; right: 11px; bottom: 7px; display: flex; gap: 1px; opacity: .85; pointer-events: none; }
.brand div { display: flex; flex-direction: column; justify-content: space-between; }
.brand strong { font: 700 21px/22px "Noto Sans CJK SC", sans-serif; color: #4a90d0; }
.brand b { font: 700 16px/18px "Liberation Sans", sans-serif; color: #55b66b; }
```
